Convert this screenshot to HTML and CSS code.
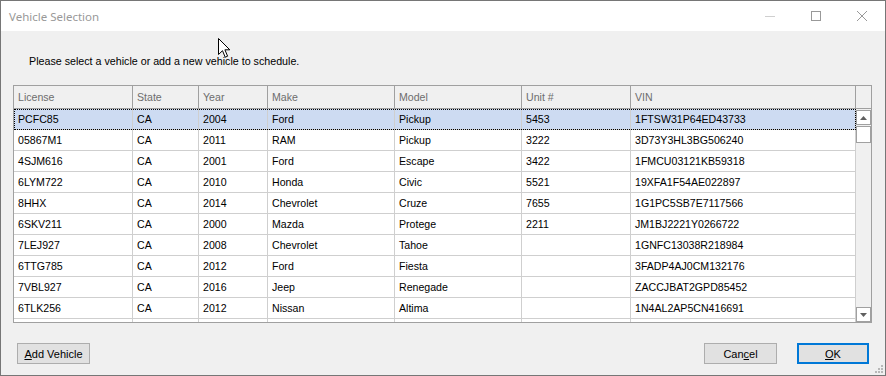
FILE: index.html
```html
<!DOCTYPE html>
<html lang="en">
<head>
  <meta charset="UTF-8">
  <title>Vehicle Selection</title>
  <link rel="stylesheet" href="styles.css">
</head>
<body>

  <div class="window">
    <div class="titlebar">
      <span class="title">Vehicle Selection</span>
      <span class="caption-btn">
        <svg width="12" height="12" viewBox="0 0 12 12"><path d="M1 6.5h10" stroke="#cfcfcf" stroke-width="1"/></svg>
      </span>
      <span class="caption-btn">
        <svg width="12" height="12" viewBox="0 0 12 12"><rect x="1.5" y="1.5" width="9" height="9" fill="none" stroke="#999" stroke-width="1"/></svg>
      </span>
      <span class="caption-btn">
        <svg width="12" height="12" viewBox="0 0 12 12"><path d="M1 1l10 10M11 1L1 11" stroke="#999" stroke-width="1"/></svg>
      </span>
    </div>

    <div class="content">
      <p class="prompt">Please select a vehicle or add a new vehicle to schedule.</p>

      <div class="grid">
        <div class="grid-head">
          <div class="cell c-license">License</div>
          <div class="cell c-state">State</div>
          <div class="cell c-year">Year</div>
          <div class="cell c-make">Make</div>
          <div class="cell c-model">Model</div>
          <div class="cell c-unit">Unit #</div>
          <div class="cell c-vin">VIN</div>
          <div class="cell c-scroll"></div>
        </div>

        <div class="grid-body">
          <div class="rows">
            <div class="row selected">
              <div class="cell c-license">PCFC85</div><div class="cell c-state">CA</div><div class="cell c-year">2004</div><div class="cell c-make">Ford</div><div class="cell c-model">Pickup</div><div class="cell c-unit">5453</div><div class="cell c-vin">1FTSW31P64ED43733</div>
            </div>
            <div class="row">
              <div class="cell c-license">05867M1</div><div class="cell c-state">CA</div><div class="cell c-year">2011</div><div class="cell c-make">RAM</div><div class="cell c-model">Pickup</div><div class="cell c-unit">3222</div><div class="cell c-vin">3D73Y3HL3BG506240</div>
            </div>
            <div class="row">
              <div class="cell c-license">4SJM616</div><div class="cell c-state">CA</div><div class="cell c-year">2001</div><div class="cell c-make">Ford</div><div class="cell c-model">Escape</div><div class="cell c-unit">3422</div><div class="cell c-vin">1FMCU03121KB59318</div>
            </div>
            <div class="row">
              <div class="cell c-license">6LYM722</div><div class="cell c-state">CA</div><div class="cell c-year">2010</div><div class="cell c-make">Honda</div><div class="cell c-model">Civic</div><div class="cell c-unit">5521</div><div class="cell c-vin">19XFA1F54AE022897</div>
            </div>
            <div class="row">
              <div class="cell c-license">8HHX</div><div class="cell c-state">CA</div><div class="cell c-year">2014</div><div class="cell c-make">Chevrolet</div><div class="cell c-model">Cruze</div><div class="cell c-unit">7655</div><div class="cell c-vin">1G1PC5SB7E7117566</div>
            </div>
            <div class="row">
              <div class="cell c-license">6SKV211</div><div class="cell c-state">CA</div><div class="cell c-year">2000</div><div class="cell c-make">Mazda</div><div class="cell c-model">Protege</div><div class="cell c-unit">2211</div><div class="cell c-vin">JM1BJ2221Y0266722</div>
            </div>
            <div class="row">
              <div class="cell c-license">7LEJ927</div><div class="cell c-state">CA</div><div class="cell c-year">2008</div><div class="cell c-make">Chevrolet</div><div class="cell c-model">Tahoe</div><div class="cell c-unit"></div><div class="cell c-vin">1GNFC13038R218984</div>
            </div>
            <div class="row">
              <div class="cell c-license">6TTG785</div><div class="cell c-state">CA</div><div class="cell c-year">2012</div><div class="cell c-make">Ford</div><div class="cell c-model">Fiesta</div><div class="cell c-unit"></div><div class="cell c-vin">3FADP4AJ0CM132176</div>
            </div>
            <div class="row">
              <div class="cell c-license">7VBL927</div><div class="cell c-state">CA</div><div class="cell c-year">2016</div><div class="cell c-make">Jeep</div><div class="cell c-model">Renegade</div><div class="cell c-unit"></div><div class="cell c-vin">ZACCJBAT2GPD85452</div>
            </div>
            <div class="row">
              <div class="cell c-license">6TLK256</div><div class="cell c-state">CA</div><div class="cell c-year">2012</div><div class="cell c-make">Nissan</div><div class="cell c-model">Altima</div><div class="cell c-unit"></div><div class="cell c-vin">1N4AL2AP5CN416691</div>
            </div>
            <div class="row">
              <div class="cell c-license"></div><div class="cell c-state"></div><div class="cell c-year"></div><div class="cell c-make"></div><div class="cell c-model"></div><div class="cell c-unit"></div><div class="cell c-vin"></div>
            </div>
          </div>

          <div class="vscroll">
            <div class="sb-btn">
              <svg width="7" height="4" viewBox="0 0 7 4"><path d="M3.5 0L7 4H0z" fill="#606060"/></svg>
            </div>
            <div class="sb-thumb"></div>
            <div class="sb-track"></div>
            <div class="sb-btn">
              <svg width="7" height="4" viewBox="0 0 7 4"><path d="M0 0h7L3.5 4z" fill="#606060"/></svg>
            </div>
          </div>
        </div>
      </div>

      <div class="footer">
        <button class="btn"><u>A</u>dd Vehicle</button>
        <span class="spacer"></span>
        <button class="btn">Can<u>c</u>el</button>
        <button class="btn default"><u>O</u>K</button>
      </div>
    </div>

    <svg class="grip" width="9" height="9" viewBox="0 0 9 9">
      <rect x="6" y="0" width="2" height="2" fill="#b8b8b8"/>
      <rect x="3" y="3" width="2" height="2" fill="#b8b8b8"/>
      <rect x="6" y="3" width="2" height="2" fill="#b8b8b8"/>
      <rect x="0" y="6" width="2" height="2" fill="#b8b8b8"/>
      <rect x="3" y="6" width="2" height="2" fill="#b8b8b8"/>
      <rect x="6" y="6" width="2" height="2" fill="#b8b8b8"/>
    </svg>

    <svg class="cursor" width="13" height="21" viewBox="0 0 13 21">
      <path d="M0.5 0.5V16.5L4.5 12.7L7.2 19.2L9.6 18.2L6.9 11.8H11.8Z" fill="#fff" stroke="#000" stroke-width="1" stroke-linejoin="miter"/>
    </svg>
  </div>

</body>
</html>
```

FILE: styles.css
```css
body {
  margin: 0;
  font-family: 'Liberation Sans', Arial, sans-serif;
  font-size: 11px;
  color: #000;
  background: #fff;
}

.window {
  position: relative;
  width: 886px;
  height: 376px;
  box-sizing: border-box;
  border: 1px solid #767676;
  background: #f0f0f0;
  display: flex;
  flex-direction: column;
  overflow: hidden;
}

.titlebar {
  height: 30px;
  background: #fff;
  display: flex;
  align-items: center;
  flex-shrink: 0;
}

.title {
  flex: 1;
  padding-left: 8px;
  font-family: 'Noto Sans', sans-serif;
  font-size: 11.5px;
  color: #999;
}

.caption-btn {
  width: 46px;
  height: 30px;
  display: flex;
  align-items: center;
  justify-content: center;
}

.content {
  flex: 1;
  display: flex;
  flex-direction: column;
}

.prompt {
  margin: 24px 0 0 28px;
  font-size: 10.7px;
  line-height: 13px;
  color: #000;
}

/* data grid */
.grid {
  margin: 17px 0 0 12px;
  width: 859px;
  height: 238px;
  box-sizing: border-box;
  border: 1px solid #a0a0a0;
  background: #fff;
  display: flex;
  flex-direction: column;
  font-size: 10.6px;
}

.grid-head {
  display: flex;
  height: 23px;
  box-sizing: border-box;
  border-bottom: 1px solid #a0a0a0;
  background: #f0f0f0;
  color: #6d6d6d;
}

.grid-head .cell {
  line-height: 22px;
  border-right: 1px solid #a0a0a0;
}

.grid-head .c-scroll {
  border-right: none;
}

.cell {
  box-sizing: border-box;
  padding-left: 4px;
  white-space: nowrap;
  overflow: hidden;
  flex-shrink: 0;
}

.c-license { width: 119px; }
.c-state { width: 66px; }
.c-year { width: 69px; }
.c-make { width: 127px; }
.c-model { width: 127px; }
.c-unit { width: 109px; }
.c-vin { width: 225px; }
.c-scroll { width: 15px; }

.grid-body {
  flex: 1;
  display: flex;
  min-height: 0;
}

.rows {
  width: 842px;
  overflow: hidden;
}

.row {
  display: flex;
  height: 21px;
  box-sizing: border-box;
  border-bottom: 1px solid #cfcfcf;
}

.row .cell {
  line-height: 20px;
  border-right: 1px solid #cfcfcf;
}

.row.selected {
  background: #cddbf2;
  outline: 1px dotted #000;
  outline-offset: -1px;
}

.vscroll {
  width: 15px;
  background: #f0f0f0;
  display: flex;
  flex-direction: column;
  padding-top: 1px;
}

.sb-btn {
  height: 15px;
  box-sizing: border-box;
  border: 1px solid #a0a0a0;
  background: #fff;
  display: flex;
  align-items: center;
  justify-content: center;
}

.sb-thumb {
  height: 17px;
  margin-top: 1px;
  box-sizing: border-box;
  border: 1px solid #a0a0a0;
  background: #fff;
}

.sb-track {
  flex: 1;
}

/* buttons */
.footer {
  display: flex;
  margin: 20px 16px 0 16px;
  gap: 20px;
}

.spacer {
  flex: 1;
}

.btn {
  width: 73px;
  height: 21px;
  padding: 0;
  font-family: 'Liberation Sans', Arial, sans-serif;
  font-size: 11px;
  color: #000;
  background: #e1e1e1;
  border: 1px solid #adadad;
}

.btn.default {
  width: 72px;
  border: 2px solid #0078d7;
}

.grip {
  position: absolute;
  right: 1px;
  bottom: 1px;
}

.cursor {
  position: absolute;
  left: 217px;
  top: 37px;
}
```
